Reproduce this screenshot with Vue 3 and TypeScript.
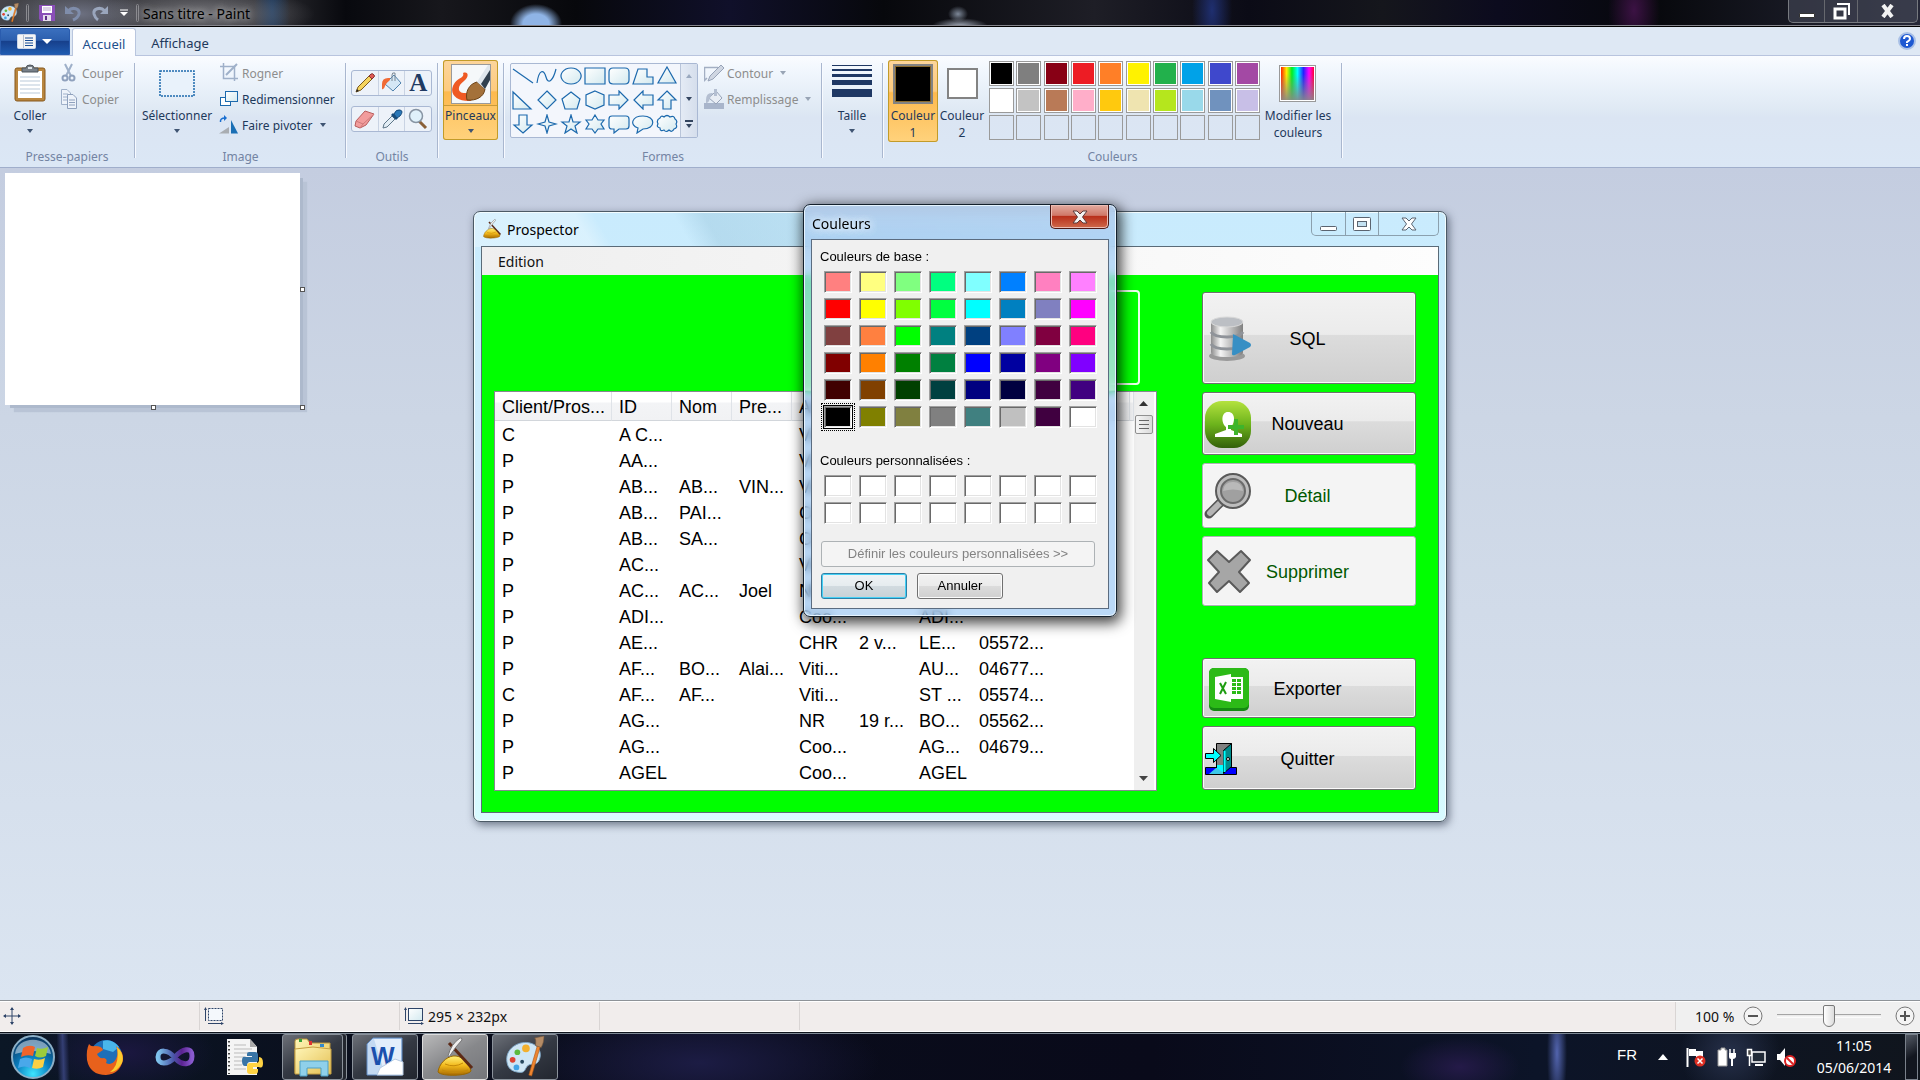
<script setup lang="ts">
import { ref } from 'vue'

const zoomLevel = ref(50)

const palette: string[] = [
  '#000000', '#7f7f7f', '#880015', '#ed1c24', '#ff7f27', '#fff200', '#22b14c', '#00a2e8', '#3f48cc', '#a349a4',
  '#ffffff', '#c3c3c3', '#b97a57', '#ffaec9', '#ffc90e', '#efe4b0', '#b5e61d', '#99d9ea', '#7092be', '#c8bfe7',
  '', '', '', '', '', '', '', '', '', '',
]

const baseColors: string[] = [
  '#ff8080', '#ffff80', '#80ff80', '#00ff80', '#80ffff', '#0080ff', '#ff80c0', '#ff80ff',
  '#ff0000', '#ffff00', '#80ff00', '#00ff40', '#00ffff', '#0080c0', '#8080c0', '#ff00ff',
  '#804040', '#ff8040', '#00ff00', '#008080', '#004080', '#8080ff', '#800040', '#ff0080',
  '#800000', '#ff8000', '#008000', '#008040', '#0000ff', '#0000a0', '#800080', '#8000ff',
  '#400000', '#804000', '#004000', '#004040', '#000080', '#000040', '#400040', '#400080',
  '#000000', '#808000', '#808040', '#808080', '#408080', '#c0c0c0', '#400040', '#ffffff',
]
const selectedBase = 40

const shapes: string[] = [
  'M1 3L21 17',
  'M1 17C3 3 8 3 10 11S17 15 20 3',
  'M11 2a10 8 0 1 0 .1 0z',
  'M1 2H21V18H1z',
  'M5 2H17Q21 2 21 6V14Q21 18 17 18H5Q1 18 1 14V6Q1 2 5 2z',
  'M6 3H15V11H21V18H1z',
  'M11 1L20 17H2z',
  'M1 2V19H19z',
  'M11 1L20 10 11 19 2 10z',
  'M11 2L20 9 17 19H5L2 9z',
  'M11 1L20 5V15L11 19 2 15V5z',
  'M1 5H11V1L20 10 11 19V15H1z',
  'M21 5H11V1L2 10 11 19V15H21z',
  'M11 1L20 10H15V19H7V10H2z',
  'M11 19L20 11H15V1H7V11H2z',
  'M11 1L13 8 20 10 13 12 11 19 9 12 2 10 9 8z',
  'M11 1L13 8H20L15 12 17 19 11 15 5 19 7 12 2 8H9z',
  'M11 1L14 6H20L17 10 20 15H14L11 19 8 15H2L5 10 2 6H8z',
  'M4 2H18Q21 2 21 5V12Q21 15 18 15H11L6 19V15H4Q1 15 1 12V5Q1 2 4 2z',
  'M11 2C24 2 24 15 11 15L5 19 6 14C-3 11 0 2 11 2z',
  'M4 4Q5 1 8 3 11 0 14 3 18 1 19 5 22 7 20 10 22 14 18 15 16 19 13 16 10 19 8 16 4 18 4 14 0 13 2 10 0 6 4 4z',
]

const columns: string[] = ['Client/Pros...', 'ID', 'Nom', 'Pre...', 'Act...', '', '', '', '']

const rows: string[][] = [
  ['C', 'A C...', '', '', 'Viti...', '', '', '', ''],
  ['P', 'AA...', '', '', 'Viti...', '', '', '', ''],
  ['P', 'AB...', 'AB...', 'VIN...', 'Viti...', '', '', '', ''],
  ['P', 'AB...', 'PAI...', '', 'Coo...', '', '', '', ''],
  ['P', 'AB...', 'SA...', '', 'Coo...', '', '', '', ''],
  ['P', 'AC...', '', '', 'Viti...', '', '', '', ''],
  ['P', 'AC...', 'AC...', 'Joel', 'NR', '', '', '', ''],
  ['P', 'ADI...', '', '', 'Coo...', '', 'ADI...', '', ''],
  ['P', 'AE...', '', '', 'CHR', '2 v...', 'LE...', '05572...', ''],
  ['P', 'AF...', 'BO...', 'Alai...', 'Viti...', '', 'AU...', '04677...', ''],
  ['C', 'AF...', 'AF...', '', 'Viti...', '', 'ST ...', '05574...', ''],
  ['P', 'AG...', '', '', 'NR', '19 r...', 'BO...', '05562...', ''],
  ['P', 'AG...', '', '', 'Coo...', '', 'AG...', '04679...', ''],
  ['P', 'AGEL', '', '', 'Coo...', '', 'AGEL', '', ''],
]
</script>

<template>
  <div class="screen">
    <!-- Shared gradients and reusable pictures -->
    <svg class="defs" aria-hidden="true">
      <defs>
        <linearGradient id="gold" x1="0" y1="0" x2="0" y2="1"><stop offset="0" stop-color="#fff27a" /><stop offset=".5" stop-color="#f2b91c" /><stop offset="1" stop-color="#a86a00" /></linearGradient>
        <linearGradient id="steel" x1="0" y1="0" x2="1" y2="0"><stop offset="0" stop-color="#8d8d8d" /><stop offset=".3" stop-color="#f4f4f4" /><stop offset=".6" stop-color="#c2c2c2" /><stop offset="1" stop-color="#808080" /></linearGradient>
        <linearGradient id="leaf" x1="0" y1="0" x2="0" y2="1"><stop offset="0" stop-color="#b4e23e" /><stop offset=".5" stop-color="#6cb31c" /><stop offset="1" stop-color="#33600a" /></linearGradient>
        <linearGradient id="shapeFill" x1="0" y1="0" x2="1" y2="1"><stop offset="0" stop-color="#fff" /><stop offset="1" stop-color="#d3e9ef" /></linearGradient>
        <linearGradient id="rainbow" x1="0" y1="0" x2="1" y2="0"><stop offset="0" stop-color="#f20" /><stop offset=".17" stop-color="#fe0" /><stop offset=".33" stop-color="#0e2" /><stop offset=".5" stop-color="#0ff" /><stop offset=".68" stop-color="#22f" /><stop offset=".85" stop-color="#f0f" /><stop offset="1" stop-color="#f03" /></linearGradient>
        <linearGradient id="fadeGrey" x1="0" y1="0" x2="0" y2="1"><stop offset=".2" stop-color="#888" stop-opacity="0" /><stop offset="1" stop-color="#888" stop-opacity=".9" /></linearGradient>
        <linearGradient id="vs" x1="0" y1="0" x2="1" y2="0"><stop offset="0" stop-color="#7fc4ee" /><stop offset=".45" stop-color="#4a56a8" /><stop offset=".7" stop-color="#5b2291" /><stop offset="1" stop-color="#8a5bd0" /></linearGradient>
        <radialGradient id="orb" cx=".5" cy=".9" r=".9"><stop offset="0" stop-color="#3ee4ff" /><stop offset=".45" stop-color="#0a7fc0" /><stop offset="1" stop-color="#0c2f55" /></radialGradient>
        <linearGradient id="folder" x1="0" y1="0" x2="1" y2="1"><stop offset="0" stop-color="#fff6b8" /><stop offset="1" stop-color="#e4bf52" /></linearGradient>
        <g id="goldPile">
          <path d="M2 35C3 27 10 20 17 19C25 18 33 25 35 34C32 39 6 40 2 35z" fill="url(#gold)" stroke="#9a6800" />
          <path d="M6 33Q18 38 32 33M9 27Q18 31 27 26" stroke="#c58a08" fill="none" />
          <path d="M13 6L36 31" stroke="#5c2a17" stroke-width="3" />
          <path d="M12 19Q15 7 24 1Q26 0 26 3Q20 9 13 20z" fill="#eee" stroke="#777" />
        </g>
        <g id="paintPalette">
          <path d="M2 27C0 14 13 5 25 7C36 9 39 18 36 25C33 32 28 28 24 31C20 35 22 39 14 38C7 37 3 34 2 27z" fill="#cfe6f5" stroke="#7fa9c9" />
          <circle cx="13" cy="17" r="3" fill="#5cba3d" /><circle cx="22" cy="13" r="4" fill="#f3b02e" />
          <circle cx="8" cy="25" r="3" fill="#de4434" /><circle cx="12" cy="33" r="3" fill="#44a5e6" /><circle cx="18" cy="27" r="2" fill="#27485f" />
          <path d="M25 41L34 10L37 11L28 42z" fill="#ee8530" stroke="#a35213" stroke-width=".6" />
          <path d="M32 10Q33 3 31 2L41 0Q41 7 38 12z" fill="#b58c66" stroke="#75583c" stroke-width=".6" />
        </g>
        <g id="win4">
          <path d="M10 13Q16 9 22 12L20 21Q14 19 8 22z" fill="#f0642c" /><path d="M24 13Q29 15 35 12L33 21Q27 24 22 21z" fill="#9ccc3c" />
          <path d="M7 24Q13 21 19 24L17 33Q12 30 5 33z" fill="#4aa8ea" /><path d="M21 24Q27 26 32 23L30 32Q25 35 19 33z" fill="#fbd043" />
        </g>
      </defs>
    </svg>

    <header class="titlebar">
      <svg class="qa-app" width="20" height="20" viewBox="0 0 42 44"><use href="#paintPalette" /></svg>
      <i class="tsep"></i>
      <button class="qa" aria-label="Enregistrer">
        <svg width="16" height="16" viewBox="0 0 16 16"><path d="M0 0H16V16H2L0 14z" fill="#8a4fb8" /><path d="M3 1H13V8H3z" fill="#fff" /><path d="M4 3H12M4 5H12" stroke="#b9a6cc" /><path d="M4 10H12V16H4z" fill="#e4dcec" /><path d="M6 11H8V15H6z" fill="#5d2f86" /></svg>
      </button>
      <button class="qa" aria-label="Annuler la frappe">
        <svg width="17" height="17" viewBox="0 0 17 17"><path d="M3 6C8 1 15 4 14 9Q13 13 8 15" fill="none" stroke="#7f8dab" stroke-width="3" /><path d="M0 1V9H9z" fill="#7f8dab" /></svg>
      </button>
      <button class="qa" aria-label="Rétablir">
        <svg width="17" height="17" viewBox="0 0 17 17"><path d="M14 6C9 1 2 4 3 9Q4 13 7 15" fill="none" stroke="#9aa6bd" stroke-width="3" /><path d="M17 1V9H9z" fill="#9aa6bd" /></svg>
      </button>
      <button class="qa narrow" aria-label="Personnaliser">
        <svg width="8" height="8" viewBox="0 0 8 8"><path d="M0 1H8" stroke="#fff" /><path d="M0 3H8L4 7z" fill="#fff" /></svg>
      </button>
      <i class="tsep"></i>
      <h1>Sans titre - Paint</h1>
      <div class="winbtns">
        <button class="w-min" aria-label="Réduire"><svg width="16" height="5"><path d="M.5.5H15.5V4.500H.5z" fill="#fff" stroke="#333" /></svg></button>
        <button class="w-max" aria-label="Restaurer"><svg width="17" height="17" viewBox="0 0 17 17"><path d="M4 1H16V12" fill="none" stroke="#fff" stroke-width="2" /><path d="M2 6H12V15H2z" fill="none" stroke="#fff" stroke-width="3" /></svg></button>
        <button class="w-close" aria-label="Fermer"><svg width="15" height="14" viewBox="0 0 15 14"><path d="M3 1L12 13M12 1L3 13" stroke="#f2f2f2" stroke-width="4" /></svg></button>
      </div>
    </header>

    <nav class="tabs">
      <button class="filebtn" aria-label="Menu Paint">
        <svg width="36" height="16" viewBox="0 0 36 16"><rect x=".5" y=".5" width="18" height="14" rx="1" fill="#f5f5f5" stroke="#cbd6e8" /><path d="M6.500 1V14" stroke="#b8c1cf" /><path d="M8 4H16M8 6.500H16M8 9H16M8 11.500H16" stroke="#1b4f97" /><path d="M25 5H35L30 10z" fill="#fff" /></svg>
      </button>
      <button class="tab active">Accueil</button>
      <button class="tab">Affichage</button>
      <button class="help" aria-label="Aide">
        <svg width="18" height="18" viewBox="0 0 18 18"><circle cx="9" cy="9" r="8" fill="#1d58d2" stroke="#a9c0e6" stroke-width="2" /><path d="M6 7Q6 4 9 4T12 7Q12 8 9 10V11" fill="none" stroke="#fff" stroke-width="2" /><path d="M8 12H10V14H8z" fill="#fff" /></svg>
      </button>
    </nav>

    <section class="ribbon">
      <div class="group g-clip">
        <div class="body">
          <button class="big paste">
            <span class="ico"><svg width="32" height="38" viewBox="0 0 32 38"><rect x="1" y="4" width="30" height="33" rx="2" fill="#b9863f" stroke="#87591f" /><path d="M4 7H28V34H4z" fill="#fff" /><path d="M6 13H26M6 17H26M6 21H26M6 25H26M6 29H26" stroke="#b9c9d9" /><path d="M8 8V4H12Q12 1 16 1T20 4H24V8z" fill="#777f88" stroke="#4d545b" /><path d="M14 3H18V5H14z" fill="#dfe5ea" /></svg></span>
            <span>Coller</span><i class="caret"></i>
          </button>
          <div class="smalls">
            <button class="small" disabled><svg width="20" height="20" viewBox="0 0 20 20"><path d="M6 1L12 13M13 1L7 13" stroke="#9fb0c9" stroke-width="2" /><circle cx="6" cy="15" r="2.500" fill="none" stroke="#8fa1bd" stroke-width="2" /><circle cx="13" cy="15" r="2.500" fill="none" stroke="#8fa1bd" stroke-width="2" /></svg>Couper</button>
            <button class="small" disabled><svg width="20" height="20" viewBox="0 0 20 20"><path d="M2.500.5H8L11.500 4V15.500H2.500z" fill="#eef3fa" stroke="#9fb0c9" /><path d="M4 5H9M4 8H9M4 11H9" stroke="#9fb0c9" /><path d="M8.500 5.500H14L17.500 9V19.500H8.500z" fill="#eef3fa" stroke="#8fa1bd" /><path d="M10 11H16M10 13.500H16M10 16H16" stroke="#8fa1bd" /></svg>Copier</button>
          </div>
        </div>
        <div class="label">Presse-papiers</div>
      </div>
      <i class="sep"></i>
      <div class="group g-image">
        <div class="body">
          <button class="big select">
            <span class="ico"><svg width="36" height="28" viewBox="0 0 36 28"><rect x="1" y="1" width="34" height="25" fill="#e9f2fb" stroke="#1c69ad" stroke-width="1.500" stroke-dasharray="2 1" /></svg></span>
            <span>Sélectionner</span><i class="caret"></i>
          </button>
          <div class="smalls">
            <button class="small" disabled><svg width="20" height="20" viewBox="0 0 20 20"><path d="M4.500 0V15.500H19M1 3.500H15.500V18" fill="none" stroke="#9fb0c9" stroke-width="1.500" /><path d="M7 12L18 1" stroke="#9fb0c9" stroke-width="2" /></svg>Rogner</button>
            <button class="small"><svg width="20" height="20" viewBox="0 0 20 20"><rect x="1.500" y="8.500" width="10" height="8" fill="#fff" stroke="#1c69ad" /><rect x="6.500" y="2.500" width="12" height="10" fill="url(#shapeFill)" stroke="#1c69ad" /></svg>Redimensionner</button>
            <button class="small"><svg width="20" height="20" viewBox="0 0 20 20"><path d="M12 5L19 18.500H12z" fill="#1a6fb5" /><path d="M10 12V18.500H0z" fill="#a9adb2" /><path d="M1.500 7Q1 3 6 3" fill="none" stroke="#1a6fd0" stroke-width="1.500" /><path d="M5 0L8 3 5 6z" fill="#1a6fd0" /></svg>Faire pivoter<i class="caret"></i></button>
          </div>
        </div>
        <div class="label">Image</div>
      </div>
      <i class="sep"></i>
      <div class="group g-tools">
        <div class="body toolrows">
          <div class="toolbox">
            <button aria-label="Crayon"><svg width="22" height="22" viewBox="0 0 22 22"><path d="M2 20L4 15 15 4 18 7 7 18z" fill="#f5d45e" stroke="#7c5a1d" /><path d="M15 4L17 2Q19 1 20 3Q21 4 20 5L18 7z" fill="#e05a55" stroke="#873332" /><path d="M2 20L3 17 5 19z" fill="#222" /></svg></button>
            <button aria-label="Remplir"><svg width="22" height="22" viewBox="0 0 22 22"><path d="M4 12L13 3 20 11 12 19z" fill="#d5e7f5" stroke="#4f82ad" /><path d="M11 9V3Q11 0 14 1V9" fill="none" stroke="#7b8794" /><path d="M9 6Q1 5 1 12V17Q3 18 4 14Q5 11 9 8z" fill="#f06a35" /></svg></button>
            <button class="letter" aria-label="Texte">A</button>
          </div>
          <div class="toolbox">
            <button aria-label="Gomme"><svg width="22" height="22" viewBox="0 0 22 22"><path d="M2 13L11 3 20 6 12 17 6 20 1 18z" fill="#f29c9c" stroke="#b75d5d" /><path d="M2 13L9 16 6 20M9 16L20 6" fill="none" stroke="#cf7a7a" /></svg></button>
            <button aria-label="Pipette"><svg width="22" height="22" viewBox="0 0 22 22"><path d="M2 20L3 16 11 8 14 11 6 19z" fill="#e3edf5" stroke="#5e7688" /><path d="M10 7L12 5 17 10 15 12z" fill="#174c7c" /><path d="M13 6Q15 1 19 2T19 8L16 10z" fill="#2b78b8" stroke="#174c7c" /></svg></button>
            <button aria-label="Loupe"><svg width="22" height="22" viewBox="0 0 22 22"><path d="M12 13L19 20" stroke="#8a6038" stroke-width="3" /><circle cx="9" cy="8" r="6.500" fill="#e0f1fb" stroke="#8794a3" stroke-width="1.500" /></svg></button>
          </div>
        </div>
        <div class="label">Outils</div>
      </div>
      <i class="sep"></i>
      <div class="group g-brush">
        <div class="body">
          <button class="big brush hot">
            <span class="ico"><svg width="40" height="40" viewBox="0 0 40 40"><rect x=".5" y=".5" width="39" height="39" fill="#f5f8fa" stroke="#9a9a9a" /><path d="M20 37C6 38-3 30 3 20C6 14 14 14 12 9C18 7 18 13 13 17C6 22 6 29 14 29L22 30z" fill="#ef5a24" /><path d="M16 36C14 28 18 20 26 18L34 25C33 33 25 37 16 36z" fill="#a4713a" stroke="#6d4317" /><path d="M26 18L37 1H39V14L34 25z" fill="#dfe6ec" /><path d="M30 20L39 6V16L34 25z" fill="#31404e" /></svg></span>
            <span>Pinceaux</span><i class="caret"></i>
          </button>
        </div>
      </div>
      <i class="sep"></i>
      <div class="group g-shapes">
        <div class="body">
          <div class="gallery">
            <div class="shapegrid">
              <button v-for="(d, i) in shapes" :key="i" aria-label="Forme"><svg width="22" height="20" viewBox="0 0 22 20"><path :d="d" :fill="i < 2 ? 'none' : 'url(#shapeFill)'" stroke="#1c69ad" stroke-width="1.200" /></svg></button>
            </div>
            <div class="gscroll">
              <button aria-label="Monter"><svg width="6" height="4"><path d="M0 4H6L3 0z" fill="#9aa9bf" /></svg></button>
              <button aria-label="Descendre"><svg width="6" height="4"><path d="M0 0H6L3 4z" fill="#33455f" /></svg></button>
              <button aria-label="Plus"><svg width="8" height="8"><path d="M0 0H8V2H0zM1 4H7L4 8z" fill="#33455f" /></svg></button>
            </div>
          </div>
          <div class="smalls">
            <button class="small" disabled><svg width="20" height="20" viewBox="0 0 20 20"><path d="M14 4.500H.5V17.500L3 15" fill="none" stroke="#a3afc3" stroke-width="1.500" /><path d="M4 18L6 13 17 2 20 5 9 16z" fill="#cfd6e2" stroke="#97a3b8" /></svg>Contour<i class="caret"></i></button>
            <button class="small" disabled><svg width="20" height="20" viewBox="0 0 20 20"><path d="M0 14H20V20H0z" fill="#a8b5cb" /><path d="M5 9L12 2 18 9 12 15z" fill="#e8edf4" stroke="#97a3b8" /><path d="M10 7V0H13V7M9 4Q2 3 2 11V14Q5 14 6 9z" fill="#b4bfd1" /></svg>Remplissage<i class="caret"></i></button>
          </div>
        </div>
        <div class="label">Formes</div>
      </div>
      <i class="sep"></i>
      <div class="group g-size">
        <div class="body">
          <button class="big size">
            <span class="ico"><svg width="40" height="33" viewBox="0 0 40 33"><path d="M0 0H40V1H0zM0 4H40V6H0zM0 9H40V12H0zM0 15H40V20H0zM0 24H40V32H0z" fill="#1f3864" /></svg></span>
            <span>Taille</span><i class="caret"></i>
          </button>
        </div>
      </div>
      <i class="sep"></i>
      <div class="group g-colors">
        <div class="body">
          <button class="big color1 hot2"><span class="ico"><i class="chip black"></i></span><span>Couleur<br>1</span></button>
          <button class="big color2"><span class="ico"><i class="chip white"></i></span><span>Couleur<br>2</span></button>
          <div class="palette">
            <button v-for="(c, i) in palette" :key="i" :class="{ empty: !c }" :style="{ backgroundColor: c || 'transparent' }" :aria-label="c || 'vide'"></button>
          </div>
          <button class="big edit">
            <span class="ico"><svg width="38" height="38" viewBox="0 0 38 38"><rect x=".5" y=".5" width="36" height="36" fill="#fff" stroke="#999" /><path d="M2 2H35V35H2z" fill="url(#rainbow)" /><path d="M2 2H35V35H2z" fill="url(#fadeGrey)" /></svg></span>
            <span>Modifier les<br>couleurs</span>
          </button>
        </div>
        <div class="label">Couleurs</div>
      </div>
      <i class="sep"></i>
    </section>

    <main class="workspace">
      <div class="sheet">
        <i class="handle right"></i><i class="handle bottom"></i><i class="handle corner"></i>
      </div>

      <section class="prospector">
        <header class="pbar">
          <svg width="20" height="20" viewBox="0 0 38 40"><use href="#goldPile" /></svg>
          <h2>Prospector</h2>
          <div class="pbtns">
            <button class="p-min" aria-label="Réduire"><svg width="18" height="7"><rect x=".5" y="1.500" width="16" height="4" rx="1" fill="#fff" stroke="#5b6470" /></svg></button>
            <button class="p-max" aria-label="Agrandir"><svg width="18" height="14"><rect x=".5" y=".5" width="17" height="13" rx="1" fill="#fff" stroke="#5b6470" /><rect x="4.500" y="4.500" width="9" height="5" fill="#c4e2f2" stroke="#5b6470" /></svg></button>
            <button class="p-close" aria-label="Fermer"><svg width="16" height="14" viewBox="0 0 16 14"><path d="M1 1H5L8 4 11 1H15L10.500 7 15 13H11L8 10 5 13H1L5.500 7z" fill="#fff" stroke="#5b6470" /></svg></button>
          </div>
        </header>
        <div class="pclient">
          <div class="pmenu"><button>Edition</button></div>
          <div class="pbody">
            <div class="pleft">
              <div class="pgroup"></div>
              <div class="list">
                <table>
                  <colgroup><col class="c-first"><col v-for="n in 6" :key="n" class="c-std"><col><col class="c-last"></colgroup>
                  <thead><tr><th v-for="(c, i) in columns" :key="i">{{ c }}</th></tr></thead>
                  <tbody><tr v-for="(r, i) in rows" :key="i"><td v-for="(t, j) in r" :key="j">{{ t }}</td></tr></tbody>
                </table>
                <div class="vscroll">
                  <svg width="10" height="6"><path d="M0 5H9L4.500 0z" fill="#333" /></svg>
                  <div class="vthumb"><svg width="10" height="12"><path d="M0 1.500H10M0 5.500H10M0 9.500H10" stroke="#666" /></svg></div>
                  <svg class="vdown" width="10" height="6"><path d="M0 0H9L4.500 5z" fill="#444" /></svg>
                </div>
              </div>
            </div>
            <div class="actions">
              <button class="act a-sql">
                <svg width="50" height="50" viewBox="0 0 50 50"><ellipse cx="23" cy="42" rx="18" ry="5" fill="#999" /><path d="M7 8V38Q7 43 23 43T39 38V8z" fill="url(#steel)" /><ellipse cx="23" cy="8" rx="16" ry="5" fill="#bcbfc4" stroke="#d9d9d9" /><path d="M7 18Q10 23 23 23T39 18M7 30Q10 35 23 35T39 30" fill="none" stroke="#8f9399" stroke-width="3" /><path d="M29 22Q28 19 31 21L46 29Q48 31 46 33L31 41Q28 42 28 40z" fill="#378fc4" /></svg>
                <span>SQL</span>
              </button>
              <button class="act a-new">
                <svg width="50" height="50" viewBox="0 0 50 50"><rect x="1" y="2" width="46" height="47" rx="17" fill="url(#leaf)" /><path d="M24 13C32 13 31 24 27 28V31L38 35V38H11V35L22 31V28C17 24 17 13 24 13z" fill="#fff" /><path d="M30 20H34V26H40V30H34V36H30V30H24V26H30z" fill="#3eb52b" /></svg>
                <span>Nouveau</span>
              </button>
              <button class="act a-detail" disabled>
                <svg width="50" height="50" viewBox="0 0 50 50"><path d="M16 32L5 43" stroke="#555" stroke-width="9" stroke-linecap="round" /><path d="M16 32L6 42" stroke="#b5b5b5" stroke-width="6" stroke-linecap="round" /><circle cx="29" cy="20" r="17" fill="#bdbdbd" stroke="#5a5a5a" stroke-width="2" /><circle cx="29" cy="20" r="12" fill="#a0a0a0" stroke="#6b6b6b" stroke-width="2" /><path d="M19 20Q20 11 29 11T39 20Q29 17 19 20z" fill="#b9b9b9" /></svg>
                <span>Détail</span>
              </button>
              <button class="act a-del" disabled>
                <svg width="50" height="50" viewBox="0 0 50 50"><path d="M4 13L13 4 25 15 37 4 46 13 35 25 45 36 36 45 25 34 13 45 5 36 15 25z" fill="#a6a6a6" stroke="#5a5a5a" stroke-width="2" stroke-linejoin="round" /></svg>
                <span>Supprimer</span>
              </button>
              <button class="act a-exp">
                <svg width="50" height="50" viewBox="0 0 50 50"><rect x="5" y="4" width="40" height="43" rx="5" fill="#158a12" /><rect x="5" y="4" width="40" height="40" rx="5" fill="#2cba17" /><path d="M27 13H39V35H27z" fill="#fff" /><path d="M28 15H32V18H28zM33 15H37V18H33zM28 19H32V22H28zM33 19H37V22H33zM28 23H32V26H28zM33 23H37V26H33zM28 27H32V30H28zM33 27H37V30H33z" fill="#2cba17" /><path d="M11 13L27 10V38L11 35z" fill="#fff" /><path d="M16 19L22 30M22 18L16 30" stroke="#1f9d12" stroke-width="2" /></svg>
                <span>Exporter</span>
              </button>
              <button class="act a-quit">
                <svg width="34" height="34" viewBox="0 0 34 34"><path d="M1.500 25.500H32.500V32.500H1.500z" fill="#00f" stroke="#000" /><path d="M5 32L12 26H20V32z" fill="#3cc8e8" /><path d="M12.500 1.500H27.500V25H12.500z" fill="#808080" stroke="#000" /><path d="M13 23H20V31L13 26z" fill="#0ff" /><path d="M19.500 8.500L27.500 1.500V24.500L19.500 31.500z" fill="#008b8b" stroke="#000" /><path d="M20.500 9V30" stroke="#0ff" stroke-width="2" /><circle cx="24" cy="17" r="1.500" fill="#fff" stroke="#000" /><path d="M1.500 11.500H9.500V6.500L17 13.500 9.500 20.500V16.500H1.500z" fill="#0ff" stroke="#000" /></svg>
                <span>Quitter</span>
              </button>
            </div>
          </div>
        </div>
      </section>

      <section class="dialog" role="dialog" aria-label="Couleurs">
        <header class="dbar">
          <h2>Couleurs</h2>
          <button class="dclose" aria-label="Fermer"><svg width="16" height="14" viewBox="0 0 16 14"><path d="M1 1H5L8 4 11 1H15L10.500 7 15 13H11L8 10 5 13H1L5.500 7z" fill="#f4f4f4" stroke="#5b3a3a" /></svg></button>
        </header>
        <div class="dclient">
          <p>Couleurs de base :</p>
          <div class="swatches">
            <button v-for="(c, i) in baseColors" :key="i" :class="{ picked: i === selectedBase }" :style="{ backgroundColor: c }" :aria-label="c"></button>
          </div>
          <p class="second">Couleurs personnalisées :</p>
          <div class="swatches custom">
            <button v-for="n in 16" :key="n" aria-label="personnalisée"></button>
          </div>
          <button class="define" disabled>Définir les couleurs personnalisées &gt;&gt;</button>
          <div class="drow">
            <button class="ok">OK</button>
            <button>Annuler</button>
          </div>
        </div>
      </section>
    </main>

    <footer class="status">
      <div class="cell"><svg width="18" height="18" viewBox="0 0 18 18"><path d="M9 1V17M1 9H17" stroke="#2e4468" /><path d="M7 3L9 0 11 3zM7 15L9 18 11 15zM3 7L0 9 3 11zM15 7L18 9 15 11z" fill="#2e4468" /></svg></div>
      <div class="cell"><svg width="20" height="18" viewBox="0 0 20 18"><rect x="4.500" y="1.500" width="14" height="12" fill="#f4f8fc" stroke="#2e4468" stroke-dasharray="2 1" /><path d="M1.500 1V14M4 16.500H19" stroke="#2e4468" /><path d="M0 3L1.500 0 3 3zM17 15L20 16.500 17 18z" fill="#2e4468" /></svg></div>
      <div class="cell"><svg width="20" height="18" viewBox="0 0 20 18"><rect x="4.500" y="1.500" width="14" height="12" fill="url(#shapeFill)" stroke="#2e4468" /><path d="M1.500 1V14M4 16.500H19" stroke="#2e4468" /><path d="M0 3L1.500 0 3 3zM17 15L20 16.500 17 18z" fill="#2e4468" /></svg>295 × 232px</div>
      <div class="cell"></div>
      <div class="cell wide"></div>
      <div class="zoom">
        <label for="zoom">100 %</label>
        <button aria-label="Zoom arrière"><svg width="20" height="20" viewBox="0 0 20 20"><circle cx="10" cy="10" r="9" fill="#f4f4f4" stroke="#777" /><path d="M5 10H15" stroke="#555" stroke-width="2" /></svg></button>
        <input id="zoom" v-model="zoomLevel" type="range" min="0" max="100">
        <button aria-label="Zoom avant"><svg width="20" height="20" viewBox="0 0 20 20"><circle cx="10" cy="10" r="9" fill="#f4f4f4" stroke="#777" /><path d="M5 10H15M10 5V15" stroke="#555" stroke-width="2" /></svg></button>
      </div>
    </footer>

    <footer class="taskbar">
      <button class="start" aria-label="Démarrer"><svg width="46" height="46" viewBox="0 0 46 46"><circle cx="23" cy="23" r="21" fill="url(#orb)" stroke="#8cb0c8" stroke-width="2" /><path d="M5 20C7 1 39 1 41 20Q23 14 5 20z" fill="#d8e8f4" opacity=".55" /><g transform="translate(3 1)"><use href="#win4" /></g></svg></button>
      <button class="task plain" aria-label="Firefox"><svg width="38" height="38" viewBox="0 0 38 38"><circle cx="20" cy="18" r="16" fill="#1d6fb8" /><path d="M17 3Q26 0 33 9L27 14 17 11z" fill="#49b6ea" /><path d="M3 6Q5 9 9 8Q16 8 17 12L11 16Q13 21 18 20Q22 21 20 25Q26 28 30 21Q33 15 30 8Q38 14 37 22Q34 36 20 37Q4 37 1 22Q0 12 3 6z" fill="#e8611c" /><path d="M31 9Q39 16 36 25Q31 34 24 34Q34 27 31 9z" fill="#fccb2e" /></svg></button>
      <button class="task plain" aria-label="Visual Studio"><svg width="40" height="24" viewBox="0 0 40 24"><path d="M20 13C13 4 3 4 3 12S13 20 20 12S37 1 37 11S27 21 20 13z" fill="none" stroke="url(#vs)" stroke-width="5" /></svg></button>
      <button class="task plain" aria-label="Python"><svg width="38" height="38" viewBox="0 0 38 38"><path d="M1 1H24L31 9V37H1z" fill="#f4f4f4" /><path d="M24 1V9H31z" fill="#aaa" /><path d="M3 3V36" stroke="#444" stroke-width="2" stroke-dasharray="1.500 2.500" /><path d="M8 7H20M8 11H26M8 15H22M8 19H20M8 23H18M8 27H16M8 31H20" stroke="#bbb" /><path d="M23 14H29Q32 14 32 17V22Q32 24 29 24H24Q21 24 21 28H19Q16 28 16 23T19 19H26V18H21V16Q21 14 23 14z" fill="#3874a6" /><path d="M33 19Q37 19 37 25T33 29H27V31H32V33Q32 36 29 36H24Q21 36 21 33V28Q21 25 24 25H30Q33 25 33 22z" fill="#ffd343" /></svg></button>
      <button class="task open stacked" aria-label="Explorateur"><svg width="40" height="40" viewBox="0 0 40 40"><path d="M2 36V4Q2 2 5 2H14L17 6H37V36z" fill="url(#folder)" stroke="#b8933a" /><path d="M6 2H9V5H6z" fill="#3aa33a" /><path d="M16 4H19V8H16z" fill="#d33" /><path d="M27 7H31V10H27z" fill="#38c" /><path d="M2 12L20 10 38 12V37H2z" fill="url(#folder)" stroke="#c59f42" /><path d="M7 39V24H35V39H28V31H14V39z" fill="#8fd0ea" stroke="#4f9fc4" /></svg></button>
      <button class="task open" aria-label="Word"><svg width="38" height="40" viewBox="0 0 38 40"><path d="M7 1H36V38H1V7z" fill="#c3d9f2" stroke="#5f8ac4" /><path d="M8 2H35V37H19z" fill="#e3eefb" /><text x="5" y="28" font-family="Liberation Sans, sans-serif" font-weight="700" font-size="25" fill="#1b50ad">W</text><path d="M14 31L29 22 37 25V38H11z" fill="#fff" stroke="#b7cbe3" /></svg></button>
      <button class="task open current" aria-label="Prospector"><svg width="38" height="40" viewBox="0 0 38 40"><use href="#goldPile" /></svg></button>
      <button class="task open" aria-label="Paint"><svg width="40" height="42" viewBox="0 0 42 44"><use href="#paintPalette" /></svg></button>
      <div class="tray">
        <span class="lang">FR</span>
        <svg width="10" height="6"><path d="M0 6H10L5 0z" fill="#fff" /></svg>
        <svg class="tico" width="20" height="20" viewBox="0 0 20 20"><path d="M1.500 1V20" stroke="#fff" stroke-width="2" /><path d="M3 2H10V4H17V11H10V9H3z" fill="#fff" /><circle cx="14" cy="14" r="5.500" fill="#dd2e22" /><path d="M11.500 11.500L16.500 16.500M16.500 11.500L11.500 16.500" stroke="#fff" stroke-width="1.500" /></svg>
        <svg class="tico" width="20" height="20" viewBox="0 0 20 20"><path d="M3 3H5V1H9V3H11V19H2V3z" fill="#fff" stroke="#999" /><path d="M14 2V6M18 2V6" stroke="#fff" stroke-width="1.500" /><path d="M13 6H20V10Q19 12 17 12V19H15V12Q13 12 13 10z" fill="#fff" /></svg>
        <svg class="tico" width="20" height="20" viewBox="0 0 20 20"><rect x="6" y="5" width="13" height="10" fill="#222b38" stroke="#fff" stroke-width="1.500" /><path d="M9 17H17V19H9z" fill="#fff" /><path d="M1.500 2.500H5.500V8.500H1.500zM3.500 9V19" fill="#444" stroke="#fff" stroke-width="1.500" /></svg>
        <svg class="tico" width="20" height="20" viewBox="0 0 20 20"><path d="M1 7H4L9 1V19L4 13H1z" fill="#fff" /><circle cx="14" cy="14" r="5" fill="#fff" stroke="#dd2222" stroke-width="2" /><path d="M11 11L17 17" stroke="#dd2222" stroke-width="2" /></svg>
        <div class="clock"><span>11:05</span><span>05/06/2014</span></div>
      </div>
      <button class="showdesk" aria-label="Afficher le bureau"></button>
    </footer>
  </div>
</template>

<style>
body { margin: 0; }
</style>

<style scoped>
.screen {
  display: flex; flex-direction: column; min-height: 100vh; overflow: hidden;
  font: 12px/17px "Noto Sans", "Open Sans", sans-serif; color: #1e395b;
}
.screen * { box-sizing: border-box; }
button { font: inherit; color: inherit; border: 0; background: none; padding: 0; margin: 0; }
h1, h2, p { margin: 0; font-weight: 400; }
svg { display: block; flex: none; }
.defs { position: absolute; width: 0; height: 0; }

/* Title bar */
.titlebar {
  display: flex; align-items: center; height: 27px; border-bottom: 1px solid #000; box-shadow: inset 0 -1px #85858c;
  background:
    radial-gradient(ellipse 110px 26px at 205px 14px, rgba(135, 135, 140, .8), transparent),
    radial-gradient(ellipse 70px 26px at 80px 14px, rgba(125, 130, 150, .75), transparent),
    radial-gradient(ellipse 26px 20px at 536px 24px, #8fb4e6 50%, transparent),
    radial-gradient(ellipse 28px 8px at 960px 26px, #a4adbb, transparent),
    radial-gradient(ellipse 10px 8px at 958px 14px, #7d8898, transparent),
    radial-gradient(ellipse 18px 60px at 272px 10px, #17375f, transparent),
    radial-gradient(ellipse 20px 60px at 1212px 10px, #1f2f70, transparent),
    radial-gradient(ellipse 26px 50px at 1634px 10px, #3c1244, transparent),
    linear-gradient(90deg, #45454a, #2b2b30 14%, #08090e 18%, #17171c 23%, #07080c 30%, #10102a 38%, #07080c 46%, #1e1e26 57%, #0b0b16 65%, #15161c 72%, #0c0b1e 78%, #07080c 86%, #262838);
}
.qa-app { width: 19px; }
.tsep { width: 3px; height: 18px; margin-left: 7px; border: 1px solid #8b8b90; border-radius: 2px; }
.qa { width: 26px; display: flex; justify-content: center; }
.tsep + .qa { margin-left: 5px; }
.qa.narrow { width: 20px; margin: 0 0 0 2px; }
.qa + .tsep { margin-left: 2px; }
.titlebar h1 { font-size: 14px; color: #000; margin-left: 4px; padding-top: 1px; text-shadow: 0 0 6px #aaa, 0 0 9px #999; }
.winbtns { display: flex; align-self: flex-start; margin: 0 2px 0 auto; height: 23px; border: 1px solid #777a80; border-top: 0; border-radius: 0 0 5px 5px; background: rgba(70, 74, 88, .6); }
.winbtns button { display: flex; justify-content: center; align-items: center; border-right: 1px solid #66686e; }
.winbtns .w-min { width: 36px; padding-top: 8px; }
.winbtns .w-max { width: 33px; }
.winbtns .w-close { width: 59px; border: 0; }

/* Tabs */
.tabs { display: flex; height: 28px; padding-top: 1px; background: #dee8f4; font-size: 13px; }
.filebtn { width: 70px; display: flex; align-items: center; justify-content: center; border: 1px solid #2a5cae; border-radius: 0 2px 0 0; background: linear-gradient(#3a6fbe, #2c5fae 45%, #17408c 50%, #1f5bb0); }
.tab { width: 80px; margin-left: 4px; padding-top: 3px; }
.tab.active { width: 64px; margin: 0 0 -1px 2px; border: 1px solid #b9c6de; border-bottom: 0; border-radius: 3px 3px 0 0; background: linear-gradient(#fff, #fafcff); color: #1e4f8c; z-index: 1; }
.help { margin: 0 4px 2px auto; }

/* Ribbon */
.ribbon {
  display: flex; height: 113px; border-top: 1px solid #b8c4de; border-bottom: 1px solid #a0aecb;
  background: linear-gradient(#fafcff, #f0f6fd 15%, #dfe9f4 48%, #dbe5f3 55%, #dbe7f5);
}
.group { display: flex; flex-direction: column; padding-top: 4px; }
.body { display: flex; height: 86px; align-items: flex-start; }
.label { text-align: center; line-height: 21px; color: #7384a3; }
.sep { width: 2px; margin: 7px 0 9px; background: #a9b7cf; border-right: 1px solid #f7faff; }
.g-clip { width: 134px; }
.g-image { width: 209px; }
.g-tools { width: 90px; }
.g-brush { width: 64px; }
.g-shapes { width: 316px; }
.g-size { width: 59px; }
.g-colors { width: 457px; }
.g-clip .body { padding-left: 5px; }
.g-image .body, .g-tools .body, .g-brush .body, .g-size .body, .g-colors .body { padding-left: 4px; }
.g-shapes .body { padding-left: 5px; }
.big { display: flex; flex-direction: column; align-items: center; height: 82px; white-space: nowrap; }
.big .ico { display: flex; height: 47px; align-items: center; }
.caret { border: 3px solid transparent; border-top: 4px solid #3f5472; border-bottom: 0; }
.big .caret { margin-top: 5px; }
.paste { width: 50px; }
.paste .ico { padding-bottom: 2px; }
.select { width: 74px; }
.brush { width: 55px; height: 80px; }
.size { width: 50px; }
.size .ico { padding-bottom: 5px; }
.color1 { width: 50px; }
.color2 { width: 48px; }
.edit { width: 72px; margin-left: 2px; }
.hot, .hot2 { border-radius: 3px; box-shadow: inset 0 0 0 1px #c29b29; background: linear-gradient(#fcd59c, #fdcb7f 38%, #fdba4f 40%, #ffd27c); }
.hot { background: linear-gradient(#fcd59c, #fdcb7f 38%, #fdba4f 40%, #fdbe58 56%, #c99b3a 56%, #c99b3a 57%, #fec564 58%, #ffd27c); }
.smalls { display: flex; flex-direction: column; margin-left: 4px; }
.g-image .smalls { margin-left: 5px; }
.g-shapes .smalls { margin-left: 6px; }
.small { display: flex; align-items: center; gap: 3px; height: 26px; white-space: nowrap; }
.small:disabled { color: #8d8d8d; }
.small .caret { margin-left: 4px; }
.small:disabled .caret { border-top-color: #98a4b5; }
.body.toolrows { flex-direction: column; gap: 10px; padding-top: 10px; }
.toolbox { display: flex; width: 81px; height: 26px; border: 1px solid #a9b8d3; border-radius: 3px; background: #edf2f9; }
.toolbox button { flex: 1; display: flex; align-items: center; justify-content: center; border-right: 1px solid #c9d3e3; }
.toolbox button:last-child { border: 0; }
.toolbox .letter { font: 700 25px/24px "Liberation Serif", serif; color: #1f3a63; }
.gallery { display: flex; width: 188px; height: 75px; margin-top: 3px; border: 1px solid #a9b8d3; border-radius: 2px; background: #f3f6fc; }
.shapegrid { display: grid; grid-template-columns: repeat(7, 24px); grid-auto-rows: 24px; width: 169px; padding-left: 1px; }
.shapegrid button { display: flex; align-items: center; }
.gscroll { flex: 1; display: grid; border-left: 1px solid #b9c5d9; background: linear-gradient(90deg, #e4ebf5, #d5deec); }
.gscroll button { display: flex; align-items: center; justify-content: center; }
.chip { display: block; border: 2px solid #838383; }
.chip.black { width: 40px; height: 40px; background: #000; box-shadow: inset 0 0 0 1px #8a6a2c; }
.chip.white { width: 31px; height: 31px; background: #fff; }
.palette { display: grid; grid-template-columns: repeat(10, 25px); grid-auto-rows: 25px; row-gap: 2px; justify-content: space-between; width: 271px; margin: 1px 0 0 3px; }
.palette button { border: 1px solid #9a9a9a; box-shadow: inset 0 0 0 1px #fff; }
.palette .empty { box-shadow: none; }

/* Drawing area */
.workspace { flex: 1; min-height: 832px; position: relative; padding: 5px; background: linear-gradient(#c4cde0, #ccd6e5 30%, #dbe5f1); }
.sheet { position: relative; width: 295px; height: 232px; background: #fff; box-shadow: 4px 4px 0 -1px #adb9cc, 8px 8px 1px -1px #b9c4d6; }
.handle { position: absolute; width: 5px; height: 5px; border: 1px solid #555; background: #fff; }
.handle.right { left: 295px; top: 114px; }
.handle.bottom { left: 146px; top: 232px; }
.handle.corner { left: 295px; top: 232px; }

/* Prospector window */
.prospector {
  position: absolute; left: 473px; top: 43px; width: 974px; padding: 0 7px 8px; border: 1px solid #4c5a66; border-radius: 7px;
  background: linear-gradient(60deg, rgba(255, 255, 255, .3) 12%, transparent 14%, transparent 22%, rgba(120, 170, 195, .25) 25%, transparent 60%) top / 100% 35px no-repeat, linear-gradient(#c9ebfd, #cdeefc 40%, #d8fbff);
  box-shadow: inset 0 0 0 1px #f2fcff, 2px 3px 8px rgba(40, 50, 70, .6);
}
.pbar { display: flex; align-items: center; height: 34px; color: #000; }
.pbar h2 { font-size: 14px; margin-left: 5px; }
.pbar > svg { margin-left: 1px; }
.pbtns { display: flex; align-self: flex-start; margin-left: auto; height: 24px; border: 1px solid #8ba0ae; border-top: 0; border-radius: 0 0 5px 5px; }
.pbtns button { display: flex; align-items: center; justify-content: center; border-right: 1px solid #8ba0ae; }
.pbtns .p-min { width: 34px; padding-top: 9px; }
.pbtns .p-max { width: 33px; }
.pbtns .p-close { width: 59px; border: 0; }
.pclient { border: 1px solid #5a6b78; background: #0f0; }
.pmenu { display: flex; height: 28px; padding-left: 16px; background: linear-gradient(90deg, #efefef, #fdfdfd); font-size: 14px; color: #111; }
.pbody { display: flex; padding: 15px 22px 21px 12px; font: 18px/26px "Liberation Sans", Arial, sans-serif; color: #000; }
.pleft { width: 663px; }
.pgroup { height: 95px; margin: 0 17px 6px 330px; border: 2px solid #e9ffe9; border-radius: 4px; }
.list { display: flex; height: 400px; border: 1px solid #84898f; background: #fff; }
.list table { flex: 1; width: 0; table-layout: fixed; border-collapse: separate; border-spacing: 0; align-self: flex-start; }
.c-first { width: 117px; }
.c-std { width: 60px; }
.c-last { width: 4px; }
.list th { height: 29px; padding: 3px 0 0 7px; font-weight: 400; text-align: left; border-right: 1px solid #dfe3e8; border-bottom: 1px solid #d2d6db; background: linear-gradient(#fff 35%, #f3f4f6 40%, #f1f2f4); }
.list td { height: 26px; padding: 0 0 0 7px; }
.list th, .list td { white-space: nowrap; overflow: hidden; }
.list th { line-height: 25px; }
.list td { line-height: 26px; }
.list th:last-child, .list td:last-child { padding-left: 0; }
.list tbody tr:first-child td { padding-top: 1px; }
.vscroll { display: flex; flex-direction: column; align-items: center; width: 20px; margin-right: 2px; padding: 9px 0 8px; background: #efefef; }
.vthumb { display: flex; align-items: center; justify-content: center; width: 18px; height: 19px; margin-top: 8px; border: 1px solid #919191; border-radius: 2px; background: linear-gradient(90deg, #f6f6f6, #dadada); }
.vdown { margin-top: auto; }
.actions { display: flex; flex-direction: column; width: 214px; margin: 2px 0 0 auto; }
.act { display: flex; align-items: center; padding: 1px 0 0 1px; margin-bottom: 8px; border: 1px solid #707070; border-radius: 3px; box-shadow: inset 0 0 0 1px #fbfbfb; background: linear-gradient(#f2f2f2, #ebebeb 46%, #dcdcdc 47%, #cfcfcf); }
.act span { flex: 1; text-align: center; padding-right: 54px; }
.act:disabled { color: #005800; border-color: #adb2b5; background: #f4f4f4; }
.a-sql { height: 92px; }
.a-new { height: 63px; }
.a-detail { height: 65px; }
.a-del { height: 70px; margin-bottom: 52px; }
.a-exp { height: 60px; }
.a-quit { height: 64px; margin: 0; }
.a-quit span { padding-right: 38px; }

/* Colour dialog */
.dialog {
  position: absolute; left: 803px; top: 36px; width: 314px; padding: 0 7px 7px; border: 1px solid #14202c; border-radius: 7px;
  background: linear-gradient(rgba(190, 210, 235, .7), rgba(185, 220, 250, .5) 60px, rgba(225, 240, 245, .6) 185px, transparent 187px), rgba(120, 180, 240, .5);
  backdrop-filter: blur(4px);
  box-shadow: inset 0 0 0 1px #e6f4ff, 2px 4px 14px 2px rgba(0, 0, 0, .75);
}
.dbar { display: flex; align-items: center; height: 34px; padding-left: 1px; color: #000; }
.dbar h2 { font-size: 14px; padding-top: 2px; text-shadow: 0 0 8px #fff, 0 0 8px #fff; }
.dclose { display: flex; align-items: center; justify-content: center; align-self: flex-start; width: 59px; height: 24px; margin-left: auto; border: 1px solid #4d1a17; border-top: 0; border-radius: 0 0 5px 5px; background: linear-gradient(#e3aba0, #d07868 45%, #b9301b 50%, #ce6a4c); box-shadow: inset 0 0 0 1px #edbdb3; }
.dclient { height: 370px; padding: 8px 12px 0 8px; border: 1px solid #5b6c80; background: #f0f0f0; font: 13px/18px "Liberation Sans", Arial, sans-serif; color: #000; }
.swatches { display: grid; grid-template-columns: repeat(8, 28px); grid-auto-rows: 22px; gap: 5px 7px; margin: 5px 0 0 4px; }
.swatches button { border: 1px solid; border-color: #a0a0a0 #fff #fff #a0a0a0; box-shadow: inset 1px 1px #696969, inset -1px -1px #e3e3e3; background: #fff; }
.swatches .picked { outline: 1px dotted #000; outline-offset: 2px; box-shadow: 0 0 0 1px #000, inset 1px 1px #696969, inset -1px -1px #e3e3e3; }
.second { margin-top: 24px; }
.define { display: block; width: 274px; height: 26px; margin: 17px 0 0 1px; border: 1px solid #adb2b5; border-radius: 3px; background: #f4f4f4; color: #838383; }
.drow { display: flex; gap: 10px; margin: 6px 0 0 1px; }
.drow button { width: 86px; height: 26px; border: 1px solid #707070; border-radius: 3px; box-shadow: inset 0 0 0 1px #fbfbfb; background: linear-gradient(#f2f2f2, #ebebeb 48%, #dcdcdc 50%, #cfcfcf); }
.drow .ok { border-color: #2a80a8; box-shadow: inset 0 0 0 1px #45d0f5; background: linear-gradient(#f0f3f5, #e6ecef 48%, #d2dbe0 50%, #c7d1d6); }

/* Status bar */
.status { display: flex; height: 32px; padding: 1px 0; border-top: 1px solid #8e9398; border-bottom: 1px solid #fff; background: #f1edec; box-shadow: inset 0 1px #fff; font-size: 14px; color: #111; }
.cell { display: flex; align-items: center; gap: 4px; width: 200px; padding-left: 3px; border-right: 1px solid #d9d5d4; }
.cell + .cell { padding-left: 4px; }
.cell.wide { flex: 1; }
.zoom { display: flex; align-items: center; padding-right: 5px; background: #f0f0f0; }
.zoom label { width: 67px; padding-left: 19px; white-space: nowrap; }
.zoom input { appearance: none; width: 104px; height: 24px; margin: 0 14px; background: linear-gradient(transparent 10px, #a5a5a5 10px, #a5a5a5 11px, #e6e6e6 11px, #fff 14px, transparent 14px); }
.zoom input::-webkit-slider-thumb { appearance: none; width: 12px; height: 22px; border: 1px solid #777; border-radius: 2px 2px 6px 6px; background: linear-gradient(90deg, #fff, #dcdcdc); }

/* Taskbar */
.taskbar {
  display: flex; align-items: center; height: 48px; border-top: 1px solid #10151d; box-shadow: inset 0 1px #7d8894; font-size: 14px; color: #fff;
  background:
    linear-gradient(88deg, transparent 58px, #343f74 64px, transparent 70px),
    radial-gradient(ellipse 10px 60px at 1557px 20px, #5264ae, transparent),
    radial-gradient(ellipse 60px 30px at 1460px 34px, #241a48, transparent),
    radial-gradient(ellipse 50px 50px at 1730px 20px, #26304a, transparent),
    radial-gradient(ellipse 180px 60px at 700px 30px, #1c1c44, transparent),
    radial-gradient(ellipse 90px 40px at 125px 20px, #1b1740, transparent),
    linear-gradient(90deg, #0b1726, #0a0e1c 20%, #090a1a 60%, #0c1428 80%, #10151d);
}
.start { margin-left: 10px; width: 46px; }
.task { display: flex; align-items: center; justify-content: center; width: 66px; height: 46px; margin-left: 4px; }
.task.plain { margin-left: 0; width: 70px; }
.start + .task { margin-left: 14px; }
.task.open { border: 1px solid #8b929b; border-radius: 3px; background: linear-gradient(150deg, #6c7078, #343943 50%, #22262f); }
.task.stacked { width: 61px; margin-left: 2px; margin-right: 5px; box-shadow: 3px 0 #23272f, 4px 0 #8b929b; }
.task.current { background: linear-gradient(150deg, #b9b9ba, #87888b 50%, #75767a); border-color: #dcdcdc; }
.tray { display: flex; align-items: center; margin-left: auto; }
.lang { font: 15px/18px "Liberation Sans", Arial, sans-serif; margin-right: 21px; padding-bottom: 4px; }
.tico { margin-left: 10px; }
.lang + svg + .tico { margin-left: 18px; }
.clock { display: flex; flex-direction: column; align-items: center; line-height: 22px; width: 76px; margin: 0 13px 0 20px; padding-top: 1px; }
.showdesk { width: 13px; height: 46px; margin-right: 2px; border: 1px solid #7a818b; background: linear-gradient(150deg, #555b66, #12161f 50%); }
</style>
